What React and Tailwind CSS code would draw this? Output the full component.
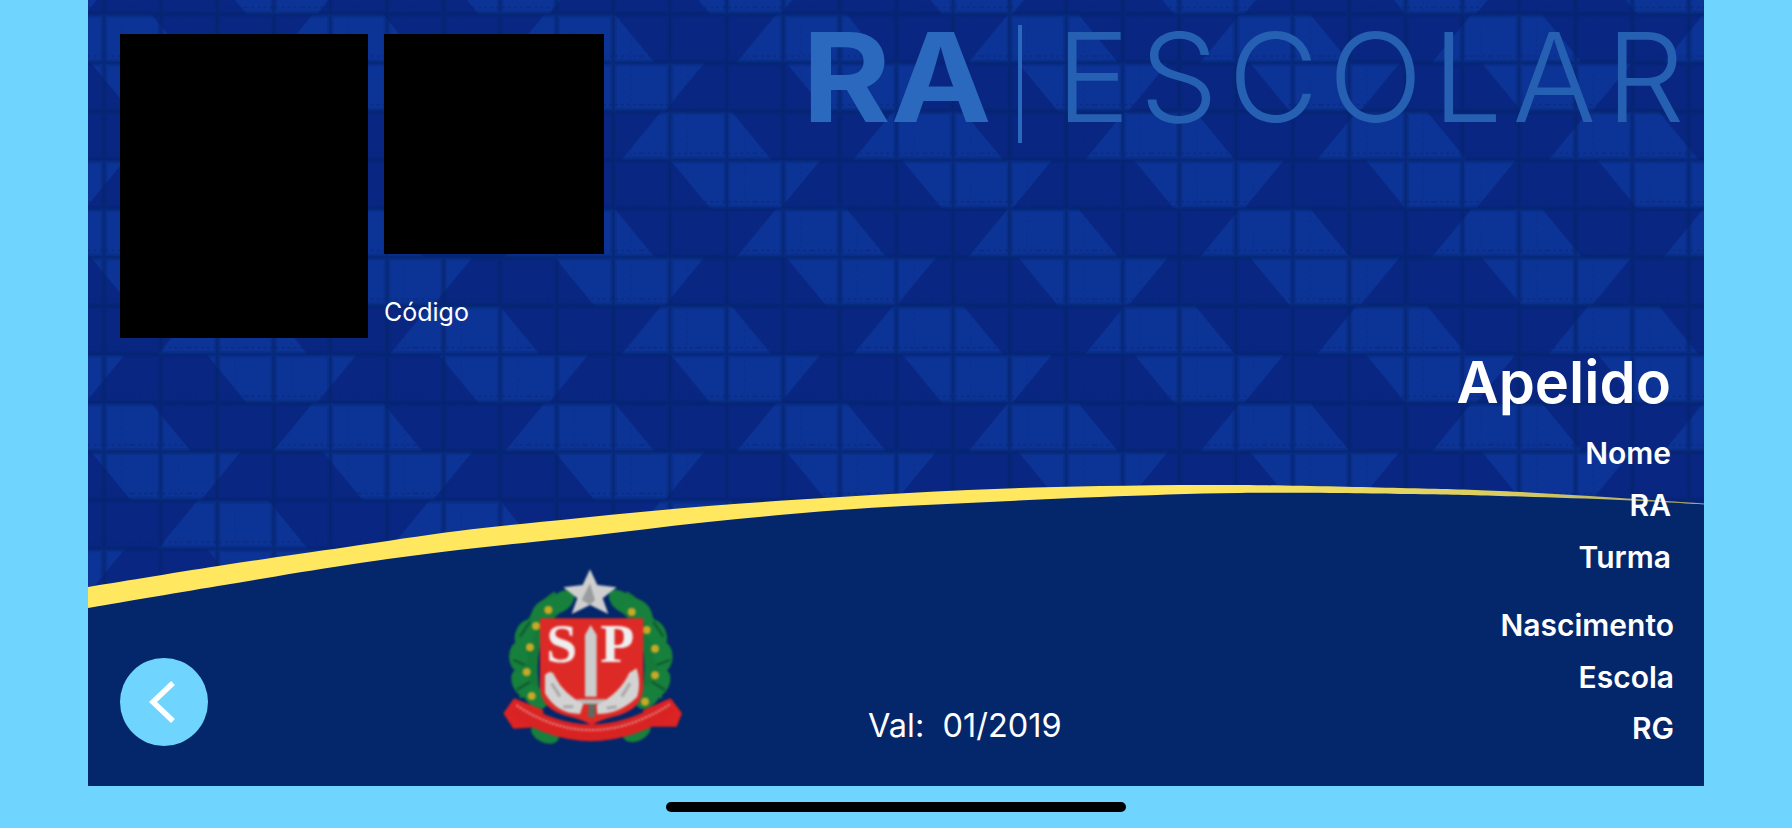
import React from 'react'

// tile of the card's background: four rows of trapezoids, wide edge alternating
const TILE_W = 231.8
const ROW_H = 48.6
const WIDE = 75
const NARROW = 35

function trapezoid(center, row, wideOnTop) {
    const top = row * ROW_H
    const bottom = top + ROW_H
    const t = wideOnTop ? WIDE : NARROW
    const b = wideOnTop ? NARROW : WIDE
    return `${center - t},${top} ${center + t},${top} ${center + b},${bottom} ${center - b},${bottom}`
}

const rows = [
    { center: 50, wideOnTop: true },
    { center: 116, wideOnTop: false },
    { center: 165.9, wideOnTop: true },
    { center: 1, wideOnTop: false },
]

// y values taken along the yellow band, card coordinates
const bandTop = [[0, 587], [130, 566], [259, 547], [370, 531], [492, 518], [620, 506], [752, 497], [880, 490], [1012, 486], [1152, 485], [1312, 488], [1412, 491], [1532, 498], [1616, 503.5]]
const bandBottom = [[0, 608], [130, 586], [259, 565], [370, 550], [492, 537], [620, 522], [752, 510], [880, 503], [1012, 497], [1152, 493], [1312, 494], [1412, 496], [1532, 500], [1616, 504.5]]

// catmull-rom through the points, so the band has no corners
function smooth(list) {
    let d = ''
    for (let i = 0; i < list.length - 1; i++) {
        const p0 = list[i - 1] || list[i]
        const p1 = list[i]
        const p2 = list[i + 1]
        const p3 = list[i + 2] || p2
        const c1 = [p1[0] + (p2[0] - p0[0]) / 6, p1[1] + (p2[1] - p0[1]) / 6]
        const c2 = [p2[0] - (p3[0] - p1[0]) / 6, p2[1] - (p3[1] - p1[1]) / 6]
        d += `C${c1.join(' ')} ${c2.join(' ')} ${p2.join(' ')}`
    }
    return d
}

const bandBottomBack = [...bandBottom].reverse()

function CardBackground() {
    return (
        <svg className="absolute inset-0 w-full h-full" width="1616" height="786">
            <defs>
                <pattern id="triangles" width={TILE_W} height={ROW_H * 4} patternUnits="userSpaceOnUse" patternTransform="translate(-88 -34.4)">
                    {rows.map((r, i) => (
                        <g key={i} fill="#0c3396">
                            <polygon points={trapezoid(r.center, i, r.wideOnTop)} />
                            <polygon points={trapezoid(r.center + TILE_W, i, r.wideOnTop)} />
                            <polygon points={trapezoid(r.center - TILE_W, i, r.wideOnTop)} />
                        </g>
                    ))}
                </pattern>
                <pattern id="gridlines" width="56.6" height="48.6" patternUnits="userSpaceOnUse" patternTransform="translate(-12.3 -10.1)">
                    <path d="M28.3 0V48.6M0 24.3H56.6" stroke="#04246c" strokeWidth="7" opacity="0.28" fill="none" />
                    <path d="M28.3 0V48.6M0 24.3H56.6" stroke="#04246c" strokeWidth="3" opacity="0.5" fill="none" />
                    <path d="M0 17.5H56.6" stroke="#052675" strokeWidth="2" strokeDasharray="3 3" opacity="0.5" fill="none" />
                    <path d="M46 0V48.6" stroke="#052675" strokeWidth="1.5" strokeDasharray="3 3" opacity="0.25" fill="none" />
                </pattern>
                <linearGradient id="band" x1="0" x2="1" y1="0" y2="0">
                    <stop offset="0" stopColor="#ffe75f" />
                    <stop offset="0.68" stopColor="#ffe75f" />
                    <stop offset="0.88" stopColor="#d8cc60" />
                    <stop offset="1" stopColor="#a9a470" />
                </linearGradient>
            </defs>
            <rect width="1616" height="786" fill="#082682" />
            <rect width="1616" height="786" fill="url(#triangles)" />
            <rect width="1616" height="786" fill="url(#gridlines)" />
            <g className="blur-[0.7px]">
                <path d={`M0 608${smooth(bandBottom)}V800H0Z`} fill="#04266a" />
                <path d={`M0 587${smooth(bandTop)}L1616 504.5${smooth(bandBottomBack)}Z`} fill="url(#band)" />
            </g>
        </svg>
    )
}

function Logo() {
    return (
        <div className="flex items-start h-[118px] -mt-[9px] ml-[198px] text-[#2a69bd] blur-[0.7px] text-[124px] leading-[150px] whitespace-nowrap">
            <span className="-mt-[23px] font-bold inline-block origin-left scale-x-[1.09]">RA</span>
            <span className="shrink-0 w-[4px] h-[118px] bg-[#2a69bd] ml-[42px] mr-[34px]"></span>
            <span className="-mt-[23px] font-light text-[#2560b2] tracking-[10px]">ESCOLAR</span>
        </div>
    )
}

// coat of arms, drawn in a 720x660 box and shown at a third of that
function Emblem() {
    const leaves = [
        [245, 155, -40], [190, 182, -45], [135, 250, -65], [115, 320, 90], [125, 400, 65], [165, 440, 45],
        [425, 155, 40], [480, 182, 45], [530, 250, 65], [550, 320, 90], [540, 400, 115], [505, 440, 135],
        [195, 550, 25], [470, 545, -25],
    ]
    const spots = [[205, 180], [150, 292], [140, 366], [155, 438], [455, 186], [500, 240], [525, 296], [525, 376], [495, 455], [168, 228]]
    return (
        <svg viewBox="0 0 720 660" className="w-[240px] h-[220px] blur-[0.8px]">
            <path d="M240 150Q115 230 150 440" stroke="#157a39" strokeWidth="62" fill="none" />
            <path d="M425 150Q555 230 515 440" stroke="#157a39" strokeWidth="62" fill="none" />
            {leaves.map(([x, y, r], i) => (
                <ellipse key={i} cx={x} cy={y} rx="44" ry="28" transform={`rotate(${r} ${x} ${y})`} fill="#17803c" />
            ))}
            <path d="M150 215L120 260M100 330L135 345M110 420L150 395M520 215L550 260M570 330L530 345M555 420L515 395" stroke="#0d5a31" strokeWidth="7" fill="none" />
            {spots.map(([x, y], i) => (
                <circle key={i} cx={x} cy={y} r="12" fill="#c9a924" />
            ))}
            <polygon points="330,58 352,105 410,112 368,145 385,192 330,165 275,192 292,145 250,112 308,105" fill="#cfcfcf" />
            <polygon points="330,100 345,150 330,165 305,150" fill="#9a9d9e" />
            <path d="M180 205H490V410Q490 480 400 500Q360 510 335 525Q310 510 270 500Q180 480 180 410Z" fill="#de2a26" />
            <text x="245" y="335" textAnchor="middle" fontFamily="Liberation Serif, serif" fontWeight="bold" fontSize="167" fill="#eeeeee">S</text>
            <text x="412" y="335" textAnchor="middle" fontFamily="Liberation Serif, serif" fontWeight="bold" fontSize="167" fill="#eeeeee">P</text>
            <path d="M332 225L350 255V440H315V255Z" fill="#cccccc" />
            <rect x="290" y="448" width="90" height="14" rx="6" fill="#b9b9b9" />
            <rect x="325" y="462" width="20" height="40" fill="#5d6b5e" />
            <path d="M195 375Q215 355 225 380Q250 430 310 462L300 492Q230 492 195 430Z" fill="#d3d3d3" />
            <path d="M470 355Q484 400 472 440Q420 492 352 492L350 465Q420 430 448 368Z" fill="#d3d3d3" />
            <path d="M215 400L240 440M250 470L280 470M450 400L425 440M410 470L380 475" stroke="#a9a9a9" strokeWidth="9" fill="none" />
            <path d="M70 490L102 445L190 480L190 530L100 536Z" fill="#dd2323" />
            <path d="M606 490L572 445L490 480L490 530L590 530Z" fill="#dd2323" />
            <path d="M105 472Q330 625 572 470" stroke="#d92323" strokeWidth="50" fill="none" />
            <path d="M110 466Q330 615 568 464" stroke="#f0bcbc" strokeWidth="6" strokeDasharray="5 6" fill="none" />
        </svg>
    )
}

function Info({ children, className = '' }) {
    return <p className={`text-[30px] leading-[34px] font-semibold text-white ${className}`}>{children}</p>
}

export default function App() {
    return (
        <div className="w-full h-[828px] bg-[#6fd5ff] overflow-hidden flex flex-col font-['Inter',sans-serif]">
            <div className="relative mx-[88px] h-[786px] overflow-hidden flex flex-col">
                <CardBackground />

                <div className="relative flex h-[338px] pl-[32px] pt-[34px]">
                    <div className="w-[248px] h-[304px] bg-black"></div>
                    <div className="w-[220px] ml-[16px] flex flex-col">
                        <div className="w-[220px] h-[220px] bg-black"></div>
                        <span className="mt-[44px] text-[25px] leading-[29px] text-white">Código</span>
                    </div>
                    <Logo />
                </div>

                <div className="relative flex-1 flex justify-between">
                    <div className="flex items-end pl-[32px]">
                        <button className="w-[88px] h-[88px] mb-[40px] rounded-full bg-[#6fd5ff] flex items-center justify-center">
                            <svg width="88" height="88" viewBox="0 0 88 88">
                                <path d="M53 25L33 44L53 63" stroke="#fff" strokeWidth="5.5" fill="none" />
                            </svg>
                        </button>
                        <div className="ml-[272px] mb-[16px]">
                            <Emblem />
                        </div>
                        <span className="ml-[148px] mb-[42px] text-[32.5px] leading-[36px] text-white whitespace-pre">Val:  01/2019</span>
                    </div>

                    <div className="flex flex-col items-end text-right">
                        <div className="flex flex-col items-end pr-[33px] pt-[10px]">
                            <h1 className="text-[58px] leading-[68px] font-semibold text-white">Apelido</h1>
                            <Info className="mt-[20px]">Nome</Info>
                            <Info className="mt-[18px]">RA</Info>
                            <Info className="mt-[18px]">Turma</Info>
                        </div>
                        <div className="flex flex-col items-end pr-[30px] mt-[34px]">
                            <Info>Nascimento</Info>
                            <Info className="mt-[18px]">Escola</Info>
                            <Info className="mt-[17px]">RG</Info>
                        </div>
                    </div>
                </div>
            </div>
            <div className="w-[460px] h-[10px] mt-[16px] mx-auto rounded-full bg-black"></div>
        </div>
    )
}
